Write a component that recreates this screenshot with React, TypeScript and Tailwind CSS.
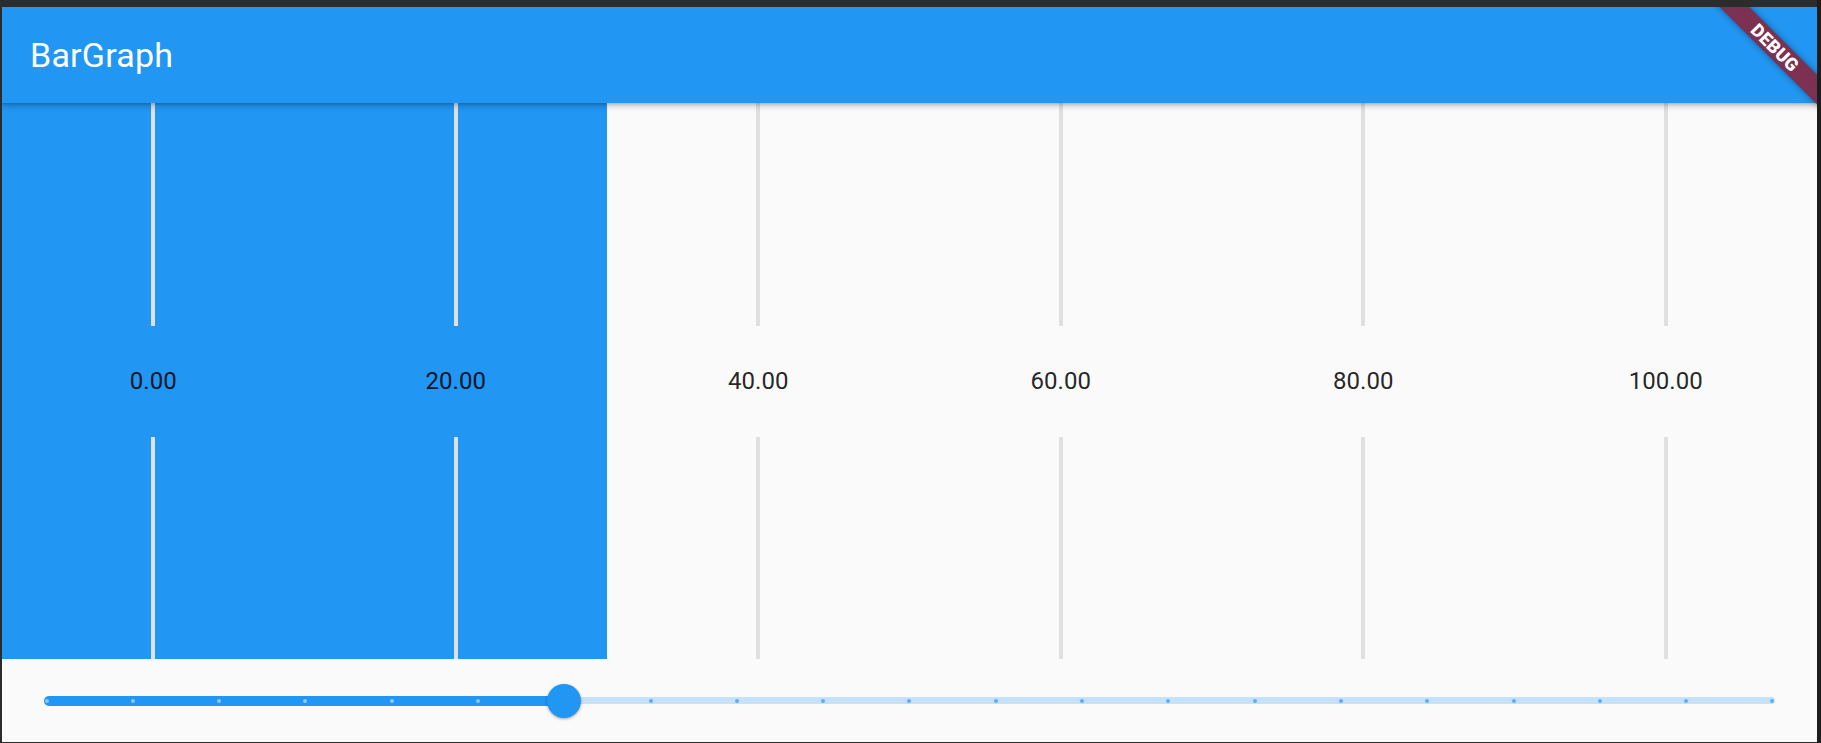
import React from "react";

const labels = ["0.00", "20.00", "40.00", "60.00", "80.00", "100.00"];
const ticks = Array.from({ length: 21 }, (_, i) => i);
const thumbIndex = 6;

function Column({ label }: { label: string }) {
  return (
    <div className="flex-1 flex flex-col items-center">
      <div className="w-[4px] flex-1 bg-[#e0e0e0]" />
      <div className="h-[111px] flex items-center justify-center text-[24px] leading-none text-black/[0.87]">
        {label}
      </div>
      <div className="w-[4px] flex-1 bg-[#e0e0e0]" />
    </div>
  );
}

export default function App() {
  return (
    <div
      className="w-[1821px] h-[743px] bg-[#2c2c2c] pt-[7px] pl-[2px] pb-[1px] border-r-[4px] border-[#1d1d1d] flex"
      style={{ fontFamily: "Roboto, 'Noto Sans', sans-serif" }}
    >
      <div className="relative flex-1 flex flex-col bg-[#fafafa] overflow-hidden">
        {/* App bar */}
        <div className="relative z-10 h-[96px] shrink-0 bg-[#2196f3] flex items-center pl-[28px] shadow-[0_3px_6px_rgba(0,0,0,0.22),0_1px_3px_rgba(0,0,0,0.14)]">
          <span className="text-white text-[34px] font-normal leading-none tracking-[0.2px]">
            BarGraph
          </span>
        </div>

        {/* Chart */}
        <div className="relative flex-1 flex">
          <div className="absolute left-0 top-0 bottom-0 w-1/3 bg-[#2196f3]" />
          <div className="relative flex-1 flex">
            {labels.map((l) => (
              <Column key={l} label={l} />
            ))}
          </div>
        </div>

        {/* Slider */}
        <div className="h-[83px] shrink-0 flex items-center px-[42px]">
          <div className="relative flex-1 h-[34px] flex items-center">
            <div className="flex-1 h-[7px] rounded-full bg-[#c6e2f8]" />
            <div className="absolute left-0 top-1/2 -translate-y-1/2 w-[523px] h-[10px] rounded-l-full bg-[#2196f3]" />
            <div className="absolute left-[0.5px] right-[0.5px] top-1/2 -translate-y-1/2 flex justify-between items-center">
              {ticks.map((i) => (
                <div
                  key={i}
                  className={
                    i <= thumbIndex
                      ? "w-[4px] h-[4px] rounded-full bg-[#90c8f8]"
                      : "w-[4px] h-[4px] rounded-full bg-[#5caff5]"
                  }
                />
              ))}
            </div>
            <div className="absolute left-[503px] top-0 w-[34px] h-[34px] rounded-full bg-[#2196f3] shadow-[0_1px_3px_rgba(0,0,0,0.35)]" />
          </div>
        </div>

        {/* DEBUG banner */}
        <div className="absolute top-0 right-0 w-[130px] h-[130px] overflow-hidden pointer-events-none z-20">
          <div className="absolute left-[-12px] top-[30px] w-[200px] h-[21px] rotate-45 bg-[#7d3152] shadow-[0_0_6px_rgba(0,0,0,0.4)] flex items-center justify-center">
            <span className="text-white font-black text-[18px] leading-none tracking-[0.3px]">
              DEBUG
            </span>
          </div>
        </div>
      </div>
    </div>
  );
}
